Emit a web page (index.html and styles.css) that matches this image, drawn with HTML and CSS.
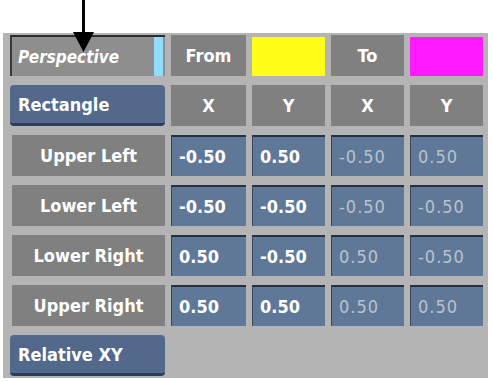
FILE: index.html
```html
<!DOCTYPE html>
<html>
<head>
    <meta charset="UTF-8">
    <title>Perspective</title>
    <link rel="stylesheet" href="styles.css">
</head>
<body>
    <!-- pointer arrow drawn over the top of the panel -->
    <svg class="arrow" width="30" height="54" viewBox="0 0 30 54">
        <rect x="11" y="0" width="3" height="36" fill="#000"/>
        <polygon points="2,32 23,32 12.5,52" fill="#000"/>
    </svg>
    <div class="top"></div>
    <div class="panel">
        <div class="mode">Perspective<span class="mode-bar"></span></div>
        <div class="cell">From</div>
        <div class="swatch yellow"></div>
        <div class="cell">To</div>
        <div class="swatch magenta"></div>

        <div class="button">Rectangle</div>
        <div class="cell">X</div>
        <div class="cell">Y</div>
        <div class="cell">X</div>
        <div class="cell">Y</div>

        <div class="cell label">Upper Left</div>
        <div class="field">-0.50</div>
        <div class="field">0.50</div>
        <div class="field dim">-0.50</div>
        <div class="field dim">0.50</div>

        <div class="cell label">Lower Left</div>
        <div class="field">-0.50</div>
        <div class="field">-0.50</div>
        <div class="field dim">-0.50</div>
        <div class="field dim">-0.50</div>

        <div class="cell label">Lower Right</div>
        <div class="field">0.50</div>
        <div class="field">-0.50</div>
        <div class="field dim">0.50</div>
        <div class="field dim">-0.50</div>

        <div class="cell label">Upper Right</div>
        <div class="field">0.50</div>
        <div class="field">0.50</div>
        <div class="field dim">0.50</div>
        <div class="field dim">0.50</div>

        <div class="button">Relative XY</div>
    </div>
</body>
</html>
```

FILE: styles.css
```css
body {
    margin: 0;
    background-color: #FFFFFF;
    font-family: "DejaVu Sans Condensed", "DejaVu Sans", sans-serif;
    font-weight: bold;
    color: #FFFFFF;
}
.arrow {
    position: absolute;
    left: 71px;
    top: 0;
    z-index: 2;
}
.top {
    height: 33px;
}
.panel {
    width: 485px;
    margin-left: 3px;
    box-sizing: border-box;
    padding: 2px 5px 2px 7px;
    background-color: #b4b4b4;
    display: grid;
    grid-template-columns: 155px 75px 73px 73px 73px;
    grid-auto-rows: 41px;
    column-gap: 6px;
    row-gap: 9px;
}
.cell {
    background-color: #808080;
    display: flex;
    align-items: center;
    justify-content: center;
    font-size: 18px;
}
.label {
    margin-left: 2px;
}
.mode {
    background-color: #8e8e8e;
    border-top: 2px solid #2c2c2c;
    border-left: 2px solid #3a3a3a;
    display: flex;
    align-items: center;
    padding-left: 6px;
    font-size: 17px;
    font-style: italic;
    position: relative;
}
.mode-bar {
    position: absolute;
    right: 2px;
    top: 0;
    bottom: 0;
    width: 9px;
    background-color: #92dcff;
}
.swatch {
    margin-top: 2px;
}
.yellow {
    background-color: #ffff1a;
}
.magenta {
    background-color: #ff1aff;
}
.button {
    background-color: #52698c;
    border-bottom: 3px solid #2c3c5c;
    border-radius: 4px;
    display: flex;
    align-items: center;
    padding-left: 8px;
    font-size: 18px;
}
.field {
    background-color: #5f7898;
    border-top: 2px solid #263040;
    border-left: 1px solid #3a4658;
    display: flex;
    align-items: center;
    padding-left: 7px;
    font-size: 18px;
}
.dim {
    color: #b9c3cf;
    font-weight: normal;
    letter-spacing: 1px;
}
```
